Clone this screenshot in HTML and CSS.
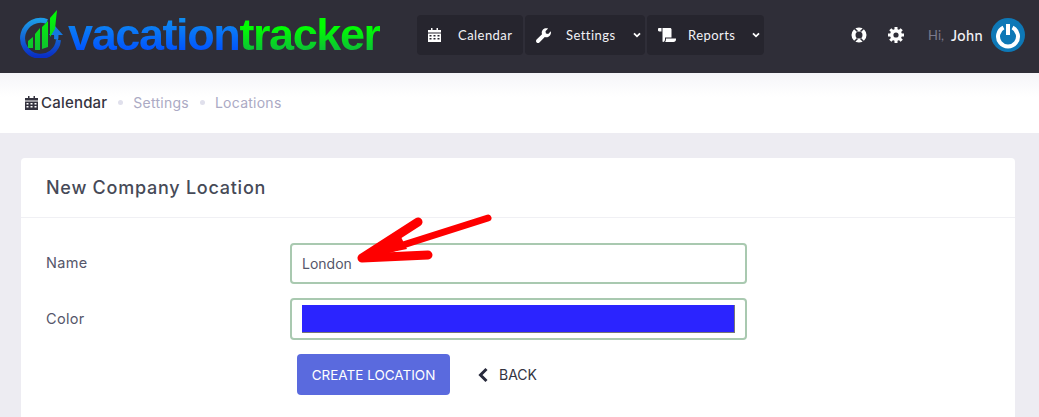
FILE: index.html
```html
<!DOCTYPE html>
<html lang="en">
<head>
    <meta charset="UTF-8">
    <meta name="viewport" content="width=device-width, initial-scale=1.0">
    <title>New Company Location</title>
    <link rel="stylesheet" href="styles.css">
</head>
<body>
    <header class="topbar">
        <a class="logo" href="#">
            <svg class="logo-mark" width="44" height="48" viewBox="0 0 44 48">
                <defs>
                    <linearGradient id="ring" x1="0" y1="0" x2="0" y2="1">
                        <stop offset="0" stop-color="#1c9be8"/>
                        <stop offset="1" stop-color="#0a2fc4"/>
                    </linearGradient>
                    <linearGradient id="bars" x1="0" y1="0" x2="0" y2="1">
                        <stop offset="0" stop-color="#00ff00"/>
                        <stop offset="1" stop-color="#10c030"/>
                    </linearGradient>
                </defs>
                <path d="M27 11.500A18 18 0 1 0 38.500 30" fill="none" stroke="url(#ring)" stroke-width="5"/>
                <path d="M35 16l8 9h-4.500a18 18 0 0 1-.5 5l-4-1a13 13 0 0 0 0-4h-5z" fill="#1478e0"/>
                <path d="M8 31l5-4v11h-5zM15 24l5-6v22h-5zM22 17l6-6v26l-6 2zM30 8l7-8-2 19-5 8z" fill="url(#bars)"/>
            </svg>
            <span class="logo-text"><span class="logo-blue">vacation</span><span class="logo-green">tracker</span></span>
        </a>
        <nav class="main-nav">
            <a class="nav-item nav-calendar" href="#">
                <svg class="nav-icon" width="13" height="14" viewBox="0 0 13 14"><path d="M3 0h1.500v2h4V0H10v2h3v2.500H0V2h3zM0 5.500h13V14H0zM1.500 7v1.500h2V7zm4 0v1.500h2V7zm4 0v1.500h2V7zm-8 3v1.500h2V10zm4 0v1.500h2V10zm4 0v1.500h2V10z" fill="#fff" fill-rule="evenodd"/></svg>
                <span class="nav-label">Calendar</span>
            </a>
            <a class="nav-item nav-settings" href="#">
                <svg class="nav-icon" width="15" height="15" viewBox="0 0 15 15"><path d="M14.800 3.300l-2.600 2.600-2.300-.4-.4-2.300L12.100.6C10.400-.2 8.300.1 7 1.500 5.700 2.800 5.400 4.600 6 6.200L.6 11.600c-.8.800-.8 2 0 2.800s2 .8 2.800 0L8.800 9c1.600.6 3.400.3 4.700-1 1.400-1.300 1.700-3.100 1.300-4.700z" fill="#fff"/></svg>
                <span class="nav-label">Settings</span>
                <svg class="nav-caret" width="8" height="6" viewBox="0 0 8 6"><path d="M1 1.300l3 3 3-3" fill="none" stroke="#fff" stroke-width="1.800"/></svg>
            </a>
            <a class="nav-item nav-reports" href="#">
                <svg class="nav-icon" width="18" height="14" viewBox="0 0 18 14"><path d="M0 .8C0 .3.400 0 1 0h2.500v3.500H1.200C.5 3.500 0 3 0 2.300zM4.500 0H12c1 0 1.500.7 1.500 1.500v8H7v2c0 1-.7 2.500-2 2.500-.3 0-.5-.5-.5-1zM8 10.500h10v1c0 1.500-1 2.500-2.500 2.500H7c.7-.7 1-1.500 1-3.500z" fill="#fff"/></svg>
                <span class="nav-label">Reports</span>
                <svg class="nav-caret" width="8" height="6" viewBox="0 0 8 6"><path d="M1 1.300l3 3 3-3" fill="none" stroke="#fff" stroke-width="1.800"/></svg>
            </a>
        </nav>
        <div class="user-area">
            <svg class="tool-icon" width="16" height="16" viewBox="0 0 16 16">
                <circle cx="8" cy="8" r="5.500" fill="none" stroke="#fff" stroke-width="4"/>
                <path d="M3.500 1.500l3 3M12.500 1.500l-3 3M3.500 14.500l3-3M12.500 14.500l-3-3" stroke="#2f2e38" stroke-width="1.500"/>
            </svg>
            <svg class="tool-icon" width="16" height="16" viewBox="0 0 16 16">
                <circle cx="8" cy="8" r="4.300" fill="none" stroke="#fff" stroke-width="3.400"/>
                <path d="M8 0v16M0 8h16M2.300 2.300l11.400 11.400M13.700 2.300L2.300 13.700" stroke="#fff" stroke-width="3" stroke-dasharray="3 10 3 0"/>
            </svg>
            <span class="hi">Hi,</span>
            <span class="user-name">John</span>
            <svg class="avatar" width="34" height="34" viewBox="0 0 34 34">
                <circle cx="17" cy="17" r="17" fill="#0e78b6"/>
                <path d="M12.500 9.500a10 10 0 1 0 9 0" fill="none" stroke="#fff" stroke-width="4"/>
                <path d="M17 6v11" stroke="#fff" stroke-width="4"/>
            </svg>
        </div>
    </header>

    <div class="subheader">
        <svg class="crumb-icon" width="13" height="14" viewBox="0 0 13 14"><path d="M3 0h1.500v2h4V0H10v2h3v2.500H0V2h3zM0 5.500h13V14H0zM1.500 7v1.500h2V7zm4 0v1.500h2V7zm4 0v1.500h2V7zm-8 3v1.500h2V10zm4 0v1.500h2V10zm4 0v1.500h2V10z" fill="#34333f" fill-rule="evenodd"/></svg>
        <a class="crumb crumb-main" href="#">Calendar</a>
        <span class="crumb-dot"></span>
        <a class="crumb" href="#">Settings</a>
        <span class="crumb-dot"></span>
        <a class="crumb" href="#">Locations</a>
    </div>

    <main class="content">
        <section class="card">
            <h3 class="card-title">New Company Location</h3>
            <form class="card-body">
                <div class="form-row">
                    <label class="form-label" for="loc-name">Name</label>
                    <input class="form-input" id="loc-name" type="text" value="London">
                </div>
                <div class="form-row form-row-color">
                    <label class="form-label" for="loc-color">Color</label>
                    <div class="form-input color-box" id="loc-color"><div class="color-swatch"></div></div>
                </div>
                <div class="form-actions">
                    <button class="btn-create" type="button">CREATE LOCATION</button>
                    <a class="btn-back" href="#">
                        <svg width="10" height="16" viewBox="0 0 10 16"><path d="M8.500 2L2.500 8l6 6" fill="none" stroke="#282a3c" stroke-width="3"/></svg>
                        BACK
                    </a>
                </div>
            </form>
        </section>
    </main>

    <!-- annotation drawn over the screenshot -->
    <svg class="annotation" width="140" height="60" viewBox="0 0 140 60">
        <path d="M5 45L61 9M5 45L71 42" fill="none" stroke="#fe0000" stroke-width="9" stroke-linecap="round"/>
        <path d="M5 45L131 5" fill="none" stroke="#fe0000" stroke-width="7" stroke-linecap="round"/>
        <path d="M5 45L44 24L50 36z" fill="#fe0000"/>
    </svg>
</body>
</html>
```

FILE: styles.css
```css
html, body {
    margin: 0;
    height: 417px;
    overflow: hidden;
}
body {
    position: relative;
    font-family: Inter, "Open Sans", sans-serif;
    font-size: 14px;
    color: #4a4a5c;
    background-color: #edecf2;
}
a {
    text-decoration: none;
    color: inherit;
}

/* top bar */
.topbar {
    display: flex;
    align-items: center;
    height: 73px;
    padding: 0 14px 3px 20px;
    box-sizing: border-box;
    background-color: #2f2e38;
}
.logo {
    display: flex;
    align-items: center;
    width: 397px;
}
.logo-mark {
    margin-top: -2px;
}
.logo-text {
    margin-left: 4px;
    font-family: "Liberation Sans", Arial, sans-serif;
    font-size: 45px;
    font-weight: bold;
    letter-spacing: -1.4px;
    line-height: 48px;
}
.logo-blue, .logo-green {
    -webkit-background-clip: text;
    background-clip: text;
    color: transparent;
}
.logo-blue {
    background-image: linear-gradient(#0f8cf0 20%, #0050ff 85%);
}
.logo-green {
    background-image: linear-gradient(#00ff00 35%, #0dbb3a 85%);
}
.main-nav {
    display: flex;
    gap: 2px;
}
.nav-item {
    display: flex;
    align-items: center;
    height: 40px;
    box-sizing: border-box;
    padding-left: 11px;
    border-radius: 4px;
    background-color: #26252e;
    color: #f2f2f6;
    font-family: Lato, sans-serif;
    font-size: 13px;
}
.nav-calendar {
    width: 106px;
}
.nav-settings {
    width: 120px;
}
.nav-reports {
    width: 117px;
}
.nav-label {
    letter-spacing: 0.45px;
}
.nav-calendar .nav-label {
    margin-left: 17px;
}
.nav-settings .nav-label {
    margin-left: 15px;
}
.nav-reports .nav-label {
    margin-left: 12px;
}
.nav-caret {
    margin-left: auto;
    margin-right: 4px;
}
.user-area {
    display: flex;
    align-items: center;
    margin-left: auto;
}
.tool-icon {
    margin-right: 21px;
}
.hi {
    color: #7b7a8c;
    font-family: Lato, sans-serif;
    font-size: 13px;
    margin-left: 3px;
}
.user-name {
    margin-left: 7px;
    color: #f2f2f6;
    font-family: Lato, sans-serif;
    font-size: 14.5px;
    font-weight: 500;
    letter-spacing: 0.4px;
}
.avatar {
    margin-left: 8px;
}

/* breadcrumb strip */
.subheader {
    display: flex;
    align-items: center;
    height: 60px;
    box-sizing: border-box;
    padding: 0 0 1px 25px;
    background: linear-gradient(#f5f5f9, #ffffff 40%);
}
.crumb {
    font-size: 14px;
    letter-spacing: 0.25px;
    color: #abaac4;
}
.crumb-main {
    margin-left: 3px;
    font-size: 15px;
    letter-spacing: 0.2px;
    color: #34333f;
    font-weight: 500;
}
.crumb-dot {
    width: 5px;
    height: 5px;
    margin: 0 10px 0 11px;
    border-radius: 50%;
    background-color: #e0e0ec;
}

/* card */
.content {
    padding: 25px 24px 0 21px;
}
.card {
    height: 259px;
    overflow: hidden;
    border-radius: 4px 4px 0 0;
    background-color: #fff;
}
.card-title {
    margin: 0;
    height: 60px;
    box-sizing: border-box;
    padding: 18px 25px 0;
    border-bottom: 1px solid #f0f0f4;
    font-size: 18px;
    font-weight: 500;
    letter-spacing: 0.75px;
    line-height: 23px;
    color: #464a57;
}
.card-body {
    padding: 25px 25px 0;
}
.form-row {
    display: flex;
    align-items: center;
    height: 41px;
    margin-bottom: 14px;
}
.form-row-color {
    height: 42px;
}
.form-row-color .form-input {
    height: 42px;
}
.form-label {
    width: 244px;
    padding-bottom: 2px;
    font-size: 14.5px;
    letter-spacing: 0.3px;
    color: #55566a;
}
.form-input {
    width: 457px;
    height: 41px;
    box-sizing: border-box;
    padding: 0 10px;
    border: 2px solid #a9c9b0;
    border-radius: 4px;
    font-family: Inter, sans-serif;
    font-size: 14px;
    color: #55566a;
    outline: none;
}
.color-box {
    display: flex;
    align-items: center;
}
.color-swatch {
    width: 433px;
    height: 28px;
    box-sizing: border-box;
    border-right: 1px solid #777;
    border-bottom: 1px solid #777;
    background-color: #2b24ff;
}
.form-actions {
    display: flex;
    align-items: center;
    padding-left: 251px;
}
.btn-create {
    width: 153px;
    height: 41px;
    border: none;
    border-radius: 4px;
    background-color: #5a6ade;
    color: #fff;
    font-family: Inter, sans-serif;
    font-size: 13.5px;
    cursor: pointer;
}
.btn-back {
    display: flex;
    align-items: center;
    gap: 11px;
    margin-left: 28px;
    color: #33343f;
}

.annotation {
    position: absolute;
    left: 357px;
    top: 213px;
}
```
